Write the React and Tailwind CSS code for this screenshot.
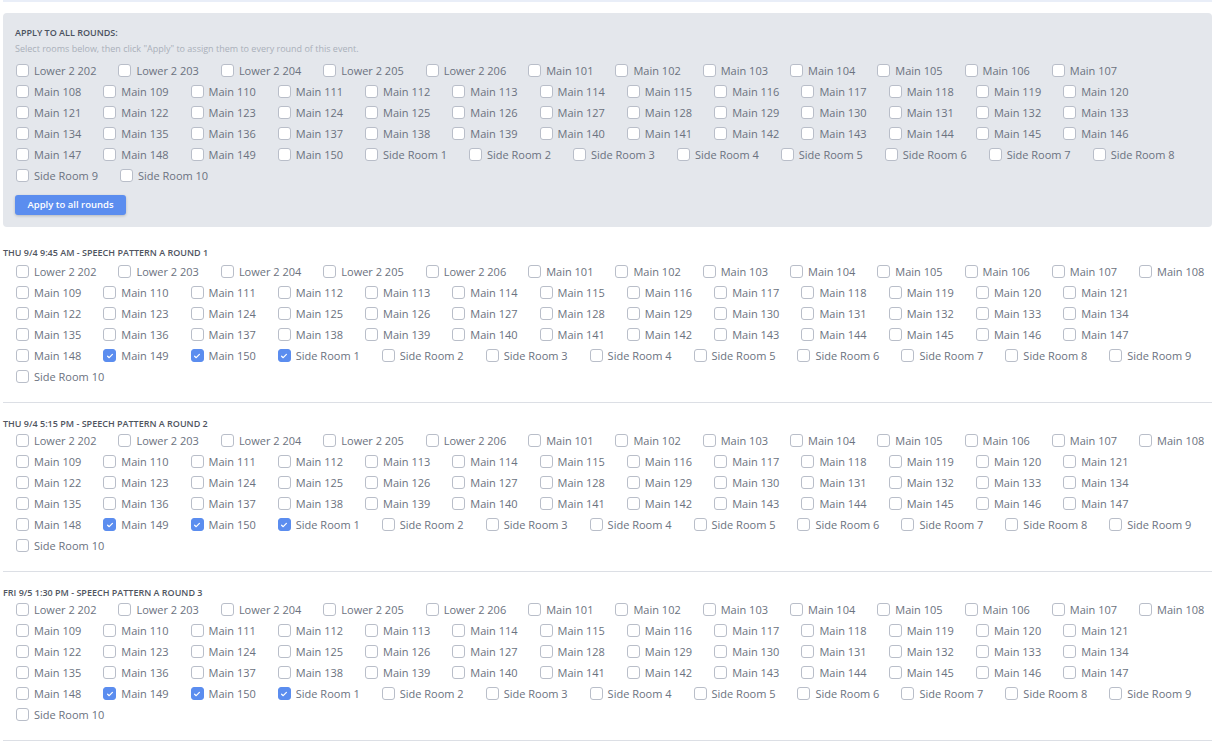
import React from "react";

const rooms = [
  ...[202, 203, 204, 205, 206].map((n) => `Lower 2 ${n}`),
  ...Array.from({ length: 50 }, (_, i) => `Main ${101 + i}`),
  ...Array.from({ length: 10 }, (_, i) => `Side Room ${i + 1}`),
];

const checkedSet = new Set(["Main 149", "Main 150", "Side Room 1"]);

function Box({ checked }) {
  if (checked) {
    return (
      <span className="w-[13px] h-[13px] rounded-[3px] bg-[#5b8def] border border-[#5b8def] flex items-center justify-center shrink-0">
        <svg width="8" height="8" viewBox="0 0 8 8" fill="none">
          <path d="M1.6 4.2 L3.2 5.7 L6.4 2.4" stroke="white" strokeWidth="1.2" strokeLinecap="round" strokeLinejoin="round" />
        </svg>
      </span>
    );
  }
  return <span className="w-[13px] h-[13px] rounded-[3px] bg-white border border-[#b9bec9] shrink-0" />;
}

function Item({ label, checked }) {
  return (
    <label className="h-[21px] inline-flex items-center">
      <Box checked={checked} />
      <span className="ml-[5px] text-[11px] leading-[21px] text-[#6b7280] whitespace-nowrap">{label}</span>
    </label>
  );
}

function Grid({ checked }) {
  return (
    <div className="flex flex-wrap gap-x-[22px]">
      {rooms.map((r) => (
        <Item key={r} label={r} checked={checked && checkedSet.has(r)} />
      ))}
    </div>
  );
}

const rounds = [
  "THU 9/4 9:45 AM - SPEECH PATTERN A ROUND 1",
  "THU 9/4 5:15 PM - SPEECH PATTERN A ROUND 2",
  "FRI 9/5 1:30 PM - SPEECH PATTERN A ROUND 3",
];

export default function App() {
  return (
    <div className="w-[1222px] h-[744px] overflow-hidden bg-white font-['Open_Sans',sans-serif]">
      <div className="w-[1212px] pl-[3px]">
        <div className="h-[2px] bg-[#e9eef8]" />
        <div className="mt-[11px] bg-[#e4e7ec] rounded-[4px] pl-[12px] pr-[12px] pt-[14px] pb-[12px]">
          <div className="text-[9px] leading-[12px] font-semibold text-[#4b5260]">APPLY TO ALL ROUNDS:</div>
          <div className="mt-[4px] text-[9px] leading-[12px] text-[#aab0ba]">
            Select rooms below, then click "Apply" to assign them to every round of this event.
          </div>
          <div className="mt-[5px] pl-[1px]">
            <Grid checked={false} />
          </div>
          <button className="mt-[9px] h-[20px] w-[111px] rounded-[3px] bg-[#5b8def] text-white text-[9.5px] font-semibold shadow-[0_1px_3px_rgba(0,0,0,0.2)]">
            Apply to all rounds
          </button>
        </div>
        {rounds.map((title, i) => (
          <div key={title} className={i === 0 ? "mt-[20px]" : "mt-[15px]"}>
            <div className="text-[9px] leading-[12px] font-semibold text-[#50555f]">{title}</div>
            <div className={i === 0 ? "mt-[2px] pl-[13px]" : "pl-[13px]"}>
              <Grid checked={true} />
            </div>
            <div className="mt-[15px] h-px bg-[#dcdfe5]" />
          </div>
        ))}
      </div>
    </div>
  );
}
